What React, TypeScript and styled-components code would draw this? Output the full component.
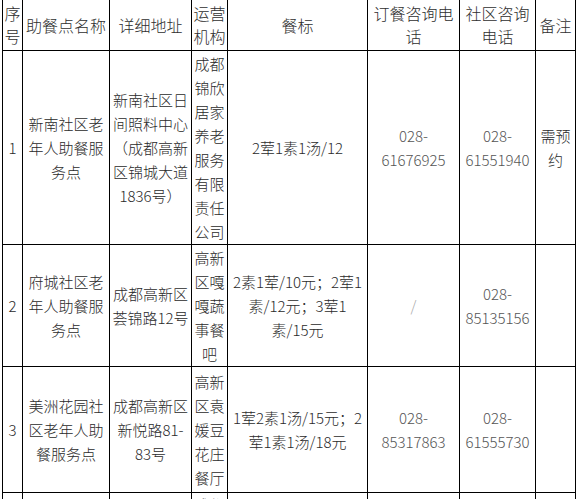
import React from "react";
import styled, { createGlobalStyle } from "styled-components";

const GlobalStyle = createGlobalStyle`
  html, body {
    margin: 0;
    padding: 0;
    background: #ffffff;
    overflow: hidden;
  }
  body {
    font-family: "Noto Sans CJK SC", "Noto Sans", sans-serif;
  }
`;

const Table = styled.div`
  display: grid;
  grid-template-columns: 19px 86px 81px 35px 139px 91px 75px 39px;
  grid-template-rows: 50px 193px 121px 125px 40px;
  gap: 1px;
  padding: 0 1px 1px 1px;
  margin-left: 2px;
  width: max-content;
  background: #000000;
`;

const HeadCell = styled.div`
  display: flex;
  align-items: center;
  justify-content: center;
  text-align: center;
  background: #ffffff;
  color: #2e2e2e;
  font-family: "Noto Sans CJK SC", "Noto Sans", sans-serif;
  font-size: 16px;
  font-weight: 300;
  line-height: 23px;
  white-space: nowrap;
`;

type Tone = "body" | "phone" | "muted";

const toneColor: Record<Tone, string> = {
  body: "#2a2a2a",
  phone: "#555555",
  muted: "#a8a8a8",
};

const Cell = styled.div<{ $tone?: Tone; $top?: boolean }>`
  display: flex;
  align-items: ${(p) => (p.$top ? "flex-start" : "center")};
  justify-content: center;
  text-align: center;
  background: #ffffff;
  color: ${(p) => toneColor[p.$tone ?? "body"]};
  font-family: "Noto Sans CJK SC", "Noto Sans", sans-serif;
  font-size: 15px;
  font-weight: 300;
  line-height: 24px;
  white-space: nowrap;
  overflow: hidden;
`;

const Lines = ({ text }: { text: string }) => (
  <span>
    {text.split("|").map((l, i, arr) => (
      <React.Fragment key={i}>
        {l}
        {i < arr.length - 1 && <br />}
      </React.Fragment>
    ))}
  </span>
);

type CellData = { text: string; tone?: Tone; top?: boolean };

const headers = [
  "序|号",
  "助餐点名称",
  "详细地址",
  "运营|机构",
  "餐标",
  "订餐咨询电|话",
  "社区咨询|电话",
  "备注",
];

const rows: CellData[][] = [
  [
    { text: "1" },
    { text: "新南社区老|年人助餐服|务点" },
    { text: "新南社区日|间照料中心|（成都高新|区锦城大道|1836号）" },
    { text: "成都|锦欣|居家|养老|服务|有限|责任|公司" },
    { text: "2荤1素1汤/12" },
    { text: "028-|61676925", tone: "phone" },
    { text: "028-|61551940", tone: "phone" },
    { text: "需预|约" },
  ],
  [
    { text: "2" },
    { text: "府城社区老|年人助餐服|务点" },
    { text: "成都高新区|荟锦路12号" },
    { text: "高新|区嘎|嘎蔬|事餐|吧" },
    { text: "2素1荤/10元；2荤1|素/12元；3荤1|素/15元" },
    { text: "/", tone: "muted" },
    { text: "028-|85135156", tone: "phone" },
    { text: "" },
  ],
  [
    { text: "3" },
    { text: "美洲花园社|区老年人助|餐服务点" },
    { text: "成都高新区|新悦路81-|83号" },
    { text: "高新|区袁|媛豆|花庄|餐厅" },
    { text: "1荤2素1汤/15元；2|荤1素1汤/18元" },
    { text: "028-|85317863", tone: "phone" },
    { text: "028-|61555730", tone: "phone" },
    { text: "" },
  ],
  [
    { text: "" },
    { text: "" },
    { text: "" },
    { text: "成都", top: true },
    { text: "" },
    { text: "" },
    { text: "" },
    { text: "" },
  ],
];

export default function App() {
  return (
    <>
      <GlobalStyle />
      <Table>
        {headers.map((h, i) => (
          <HeadCell key={`h${i}`}>
            <Lines text={h} />
          </HeadCell>
        ))}
        {rows.map((row, r) =>
          row.map((c, i) => (
            <Cell key={`r${r}c${i}`} $tone={c.tone} $top={c.top}>
              <Lines text={c.text} />
            </Cell>
          ))
        )}
      </Table>
    </>
  );
}
